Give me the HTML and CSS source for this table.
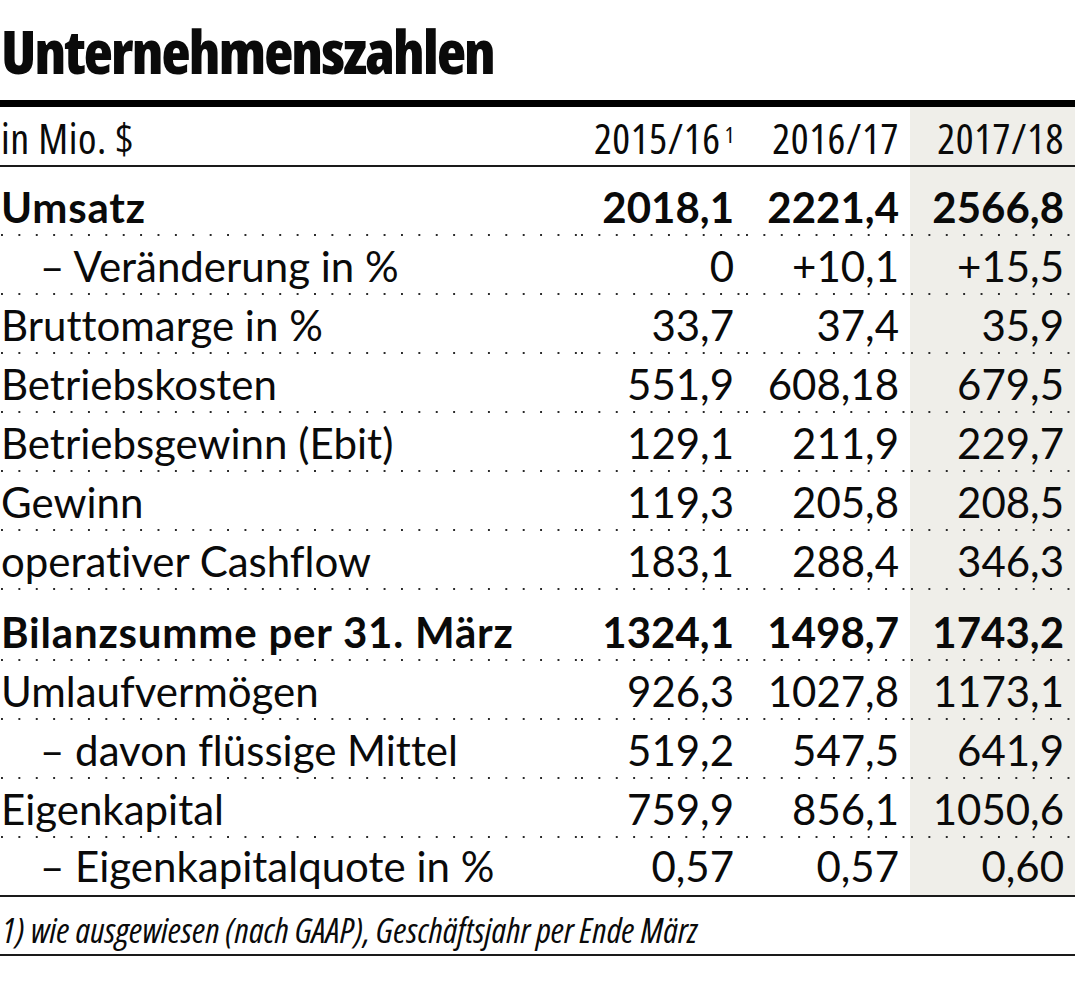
FILE: index.html
```html
<!DOCTYPE html>
<html lang="de">
<head>
<meta charset="utf-8">
<title>Unternehmenszahlen</title>
<link rel="stylesheet" href="styles.css">
</head>
<body>
<div class="figure">
  <h1 class="title">Unternehmenszahlen</h1>
  <table class="fig">
    <colgroup>
      <col class="c-label"><col class="c-num"><col class="c-num"><col class="c-num">
    </colgroup>
    <thead>
      <tr class="head">
        <th class="lbl">in Mio. $</th>
        <th class="num">2015/16<sup class="fn">1</sup></th>
        <th class="num">2016/17</th>
        <th class="num hl">2017/18</th>
      </tr>
    </thead>
    <tbody>
      <tr class="row major first">
        <td class="lbl">Umsatz</td><td class="num">2018,1</td><td class="num">2221,4</td><td class="num hl">2566,8</td>
      </tr>
      <tr class="row">
        <td class="lbl sub">– Veränderung in %</td><td class="num">0</td><td class="num">+10,1</td><td class="num hl">+15,5</td>
      </tr>
      <tr class="row">
        <td class="lbl">Bruttomarge in %</td><td class="num">33,7</td><td class="num">37,4</td><td class="num hl">35,9</td>
      </tr>
      <tr class="row">
        <td class="lbl">Betriebskosten</td><td class="num">551,9</td><td class="num">608,18</td><td class="num hl">679,5</td>
      </tr>
      <tr class="row">
        <td class="lbl">Betriebsgewinn (Ebit)</td><td class="num">129,1</td><td class="num">211,9</td><td class="num hl">229,7</td>
      </tr>
      <tr class="row">
        <td class="lbl">Gewinn</td><td class="num">119,3</td><td class="num">205,8</td><td class="num hl">208,5</td>
      </tr>
      <tr class="row">
        <td class="lbl">operativer Cashflow</td><td class="num">183,1</td><td class="num">288,4</td><td class="num hl">346,3</td>
      </tr>
      <tr class="row major">
        <td class="lbl">Bilanzsumme per 31. März</td><td class="num">1324,1</td><td class="num">1498,7</td><td class="num hl">1743,2</td>
      </tr>
      <tr class="row">
        <td class="lbl">Umlaufvermögen</td><td class="num">926,3</td><td class="num">1027,8</td><td class="num hl">1173,1</td>
      </tr>
      <tr class="row">
        <td class="lbl sub">– davon flüssige Mittel</td><td class="num">519,2</td><td class="num">547,5</td><td class="num hl">641,9</td>
      </tr>
      <tr class="row">
        <td class="lbl">Eigenkapital</td><td class="num">759,9</td><td class="num">856,1</td><td class="num hl">1050,6</td>
      </tr>
      <tr class="row last">
        <td class="lbl sub">– Eigenkapitalquote in %</td><td class="num">0,57</td><td class="num">0,57</td><td class="num hl">0,60</td>
      </tr>
    </tbody>
  </table>
  <p class="note">1) wie ausgewiesen (nach GAAP), Geschäftsjahr per Ende März</p>
</div>
</body>
</html>
```
FILE: styles.css
```css
html, body {
  margin: 0;
  padding: 0;
  background: #fff;
}

.figure {
  width: 1075px;
  color: #0a0a0a;
}

.title {
  margin: 0;
  padding: 21px 0 19px 1px;
  font-family: "Open Sans", sans-serif;
  font-stretch: 75%;
  font-weight: 800;
  font-size: 60px;
  line-height: 60px;
  letter-spacing: -1.8px;
  border-bottom: 7px solid #000;
}

.fig {
  width: 1075px;
  table-layout: fixed;
  border-collapse: separate;
  border-spacing: 0;
  font-family: Lato, "Open Sans", sans-serif;
  font-size: 42px;
  line-height: 42px;
  font-weight: 400;
  font-variant-ligatures: none;
}

.c-label { width: 580px; }
.c-num { width: 165px; }

.fig th,
.fig td {
  padding: 0 11px 8px 0;
  vertical-align: bottom;
  white-space: nowrap;
  font-weight: 400;
}

.fig .lbl {
  text-align: left;
  padding-left: 1px;
}

.fig .num {
  text-align: right;
}

.fig .hl {
  background-color: #efeee9;
}

.head th {
  height: 60px;
  box-sizing: border-box;
  padding-bottom: 6px;
  border-bottom: 2px solid #1a1a1a;
  font-family: "Open Sans", sans-serif;
  font-stretch: 75%;
  font-size: 42px;
  line-height: 42px;
  letter-spacing: 0.6px;
}

.fn {
  font-size: 22px;
  line-height: 0;
  vertical-align: 11px;
  margin-left: 4px;
  letter-spacing: 0;
}

.row td {
  height: 59px;
  box-sizing: border-box;
  background-image: linear-gradient(to right, #2a2a2a 0 2px, transparent 2px);
  background-size: 17.4px 2px;
  background-repeat: repeat-x;
  background-position: 1px 100%;
}

.row.first td {
  height: 69px;
}

.row.major td {
  font-weight: 700;
}

.row.major .lbl {
  letter-spacing: 0.8px;
}

.row.major:not(.first) td {
  height: 71px;
}

.row.last td {
  background-image: none;
  border-bottom: 2px solid #1a1a1a;
}

.fig .sub {
  padding-left: 40px;
}

.note {
  margin: 0;
  padding: 15px 0 7px 2px;
  font-family: "Open Sans", sans-serif;
  font-stretch: 75%;
  font-style: italic;
  font-size: 35px;
  line-height: 35px;
  letter-spacing: 0.1px;
  border-bottom: 2px solid #1a1a1a;
}
```
